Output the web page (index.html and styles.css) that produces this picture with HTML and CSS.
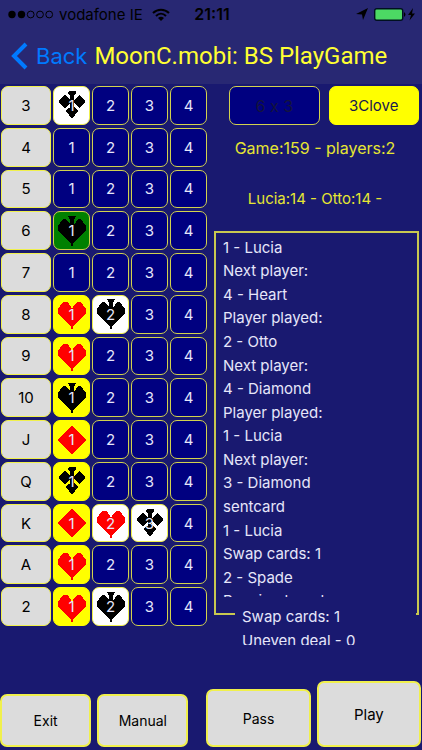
FILE: index.html
```html
<!DOCTYPE html>
<html lang="en">
<head>
<meta charset="utf-8">
<meta name="viewport" content="width=device-width, initial-scale=1">
<title>MoonC.mobi: BS PlayGame</title>
<link rel="stylesheet" href="styles.css">
</head>
<body>
<svg class="defs" aria-hidden="true">
  <symbol id="heart" viewBox="0 0 28 30"><path d="M5 3h4l2 2l2 3l1 2l1-2l2-3l2-2h4l5 7v4l-5 6l-5 4l-3 4v2h-2v-2l-3-4l-5-4l-5-6v-4z"/></symbol>
  <symbol id="spade" viewBox="0 0 28 30"><path d="M10 0h8l-2 4v4l2-2l2-3h3l5 7v4l-5 6l-5 4l-3 4v2h-2v-2l-3-4l-5-4l-5-6v-4l5-7h3l2 3l2 2v-4z"/></symbol>
  <symbol id="diamond" viewBox="0 0 28 30"><path d="M14 0l14 15l-14 15l-14-15z"/></symbol>
  <symbol id="club" viewBox="0 0 28 30"><path d="M11 1h7v2l-2 3v4l5-5h1l5 6v1l-5 6h-1l-5-5v4l1 1h1l2 3l-3 4l-2 3h-2l-2-3l-3-4l2-3h1l1-1v-4l-5 5h-1l-5-6v-1l5-6h1l5 5v-4l-2-3z"/></symbol>
</svg>
<div class="app">
  <header class="top">
    <div class="status">
      <div class="carrier">
        <svg width="46" height="9" viewBox="0 0 46 9" aria-hidden="true"><circle cx="4" cy="4.5" r="3.7"/><circle cx="13.5" cy="4.5" r="3.7"/><g fill="none" stroke="#000"><circle cx="22.700" cy="4.5" r="3.400"/><circle cx="32" cy="4.5" r="3.400"/><circle cx="41.200" cy="4.500" r="3.400"/></g></svg>
        <span>vodafone IE</span>
        <svg width="18" height="13" viewBox="0 0 18 13" aria-hidden="true"><g fill="none" stroke="#000" stroke-width="2"><path d="M1 5c4.500-4.500 11.500-4.500 16 0"/><path d="M4 8c3-3 7-3 10 0"/></g><path d="M6 10q3-2.500 6 0l-3 3z"/></svg>
      </div>
      <time class="clock">21:11</time>
      <div class="power">
        <svg width="12" height="12" viewBox="0 0 12 12" aria-hidden="true"><path d="M12 0L7 12L6 6.500L0 6z"/></svg>
        <svg width="42" height="13" viewBox="0 0 42 13" aria-hidden="true"><rect x=".7" y=".7" width="28" height="11.600" rx="2" fill="#4cd964" stroke="#001020" stroke-width="1.400"/><path d="M30 4q3 2.500 0 5zM39 0l-5 7h3l-1.500 5.500L41 5.500h-3z"/></svg>
      </div>
    </div>
    <nav class="nav">
      <a class="back" href="#"><svg width="17" height="28" viewBox="0 0 17 28" aria-hidden="true"><path d="M15 2L3 14L15 26" fill="none" stroke="#007aff" stroke-width="4"/></svg>Back</a>
      <h1>MoonC.mobi: BS PlayGame</h1>
    </nav>
  </header>

  <main class="play">
    <section class="board" aria-label="Cards">
      <button class="rank">3</button><button class="held"><svg><use href="#club"/></svg><span>1</span></button><button>2</button><button>3</button><button>4</button>
      <button class="rank">4</button><button>1</button><button>2</button><button>3</button><button>4</button>
      <button class="rank">5</button><button>1</button><button>2</button><button>3</button><button>4</button>
      <button class="rank">6</button><button class="table"><svg><use href="#spade"/></svg><span>1</span></button><button>2</button><button>3</button><button>4</button>
      <button class="rank">7</button><button>1</button><button>2</button><button>3</button><button>4</button>
      <button class="rank">8</button><button class="pick red"><svg><use href="#heart"/></svg><span>1</span></button><button class="held"><svg><use href="#spade"/></svg><span>2</span></button><button>3</button><button>4</button>
      <button class="rank">9</button><button class="pick red"><svg><use href="#heart"/></svg><span>1</span></button><button>2</button><button>3</button><button>4</button>
      <button class="rank">10</button><button class="pick"><svg><use href="#spade"/></svg><span>1</span></button><button>2</button><button>3</button><button>4</button>
      <button class="rank">J</button><button class="pick red"><svg><use href="#diamond"/></svg><span>1</span></button><button>2</button><button>3</button><button>4</button>
      <button class="rank">Q</button><button class="pick"><svg><use href="#club"/></svg><span>1</span></button><button>2</button><button>3</button><button>4</button>
      <button class="rank">K</button><button class="pick red"><svg><use href="#diamond"/></svg><span>1</span></button><button class="held red"><svg><use href="#heart"/></svg><span>2</span></button><button class="held"><svg><use href="#club"/></svg><span>3</span></button><button>4</button>
      <button class="rank">A</button><button class="pick red"><svg><use href="#heart"/></svg><span>1</span></button><button>2</button><button>3</button><button>4</button>
      <button class="rank">2</button><button class="pick red"><svg><use href="#heart"/></svg><span>1</span></button><button class="held"><svg><use href="#spade"/></svg><span>2</span></button><button>3</button><button>4</button>
    </section>

    <section class="side">
      <div class="calls">
        <button class="last">6 x 3</button>
        <button class="next">3Clove</button>
      </div>
      <p class="game">Game:159 - players:2</p>
      <p class="counts">Lucia:14 - Otto:14 -</p>
      <div class="log">
        <div class="view">
          <ul>
            <li>1 - Lucia</li>
            <li>Next player:</li>
            <li>4 - Heart</li>
            <li>Player played:</li>
            <li>2 - Otto</li>
            <li>Next player:</li>
            <li>4 - Diamond</li>
            <li>Player played:</li>
            <li>1 - Lucia</li>
            <li>Next player:</li>
            <li>3 - Diamond</li>
            <li>sentcard</li>
            <li>1 - Lucia</li>
            <li>Swap cards: 1</li>
            <li>2 - Spade</li>
            <li>Received card</li>
          </ul>
        </div>
        <div class="notice">Swap cards: 1<br>Uneven deal - 0</div>
      </div>
    </section>
  </main>

  <footer class="actions">
    <button>Exit</button>
    <button>Manual</button>
    <button class="pass">Pass</button>
    <button class="go">Play</button>
  </footer>
</div>
</body>
</html>
```
FILE: styles.css
```css
* { box-sizing: border-box; }

body {
  margin: 0;
  background: #191970;
  color: #e6e6fa;
  font-family: Inter, "Liberation Sans", sans-serif;
  font-size: 15px;
}

h1, p, ul { margin: 0; padding: 0; font-weight: 400; }

.defs { position: absolute; width: 0; height: 0; }

.app {
  display: flex;
  flex-direction: column;
  min-height: 100vh;
}

.top { background: #282873; color: #000; height: 84px; }

.status {
  display: grid;
  grid-template-columns: 1fr auto 1fr;
  align-items: center;
  height: 28px;
  padding: 0 6px 0 8px;
  font-size: 15px;
}
.carrier, .power { display: flex; align-items: center; gap: 5px; }
.carrier svg:last-child { margin-left: 4px; }
.power { justify-content: flex-end; gap: 6px; }
.clock { font-weight: 600; font-size: 16px; }

.nav { display: flex; align-items: center; height: 56px; padding-left: 11px; gap: 7px; }
.back {
  display: flex;
  align-items: center;
  gap: 8px;
  color: #007aff;
  font-size: 22px;
  text-decoration: none;
}
h1 { color: #ff3; font-family: Roboto, "Liberation Sans", sans-serif; font-size: 24px; white-space: nowrap; }

.play { flex: 1; display: flex; padding: 2px 3px 0 1px; }

button {
  display: grid;
  place-items: center;
  min-width: 0;
  margin: 0;
  padding: 0;
  border: 1px solid #d2d24e;
  border-radius: 7px;
  background: #000080;
  color: #e6e6fa;
  font: inherit;
}

.board {
  flex: 206;
  display: grid;
  grid-template-columns: 50fr 37fr 37fr 37fr 37fr;
  grid-auto-rows: 1fr;
  gap: 3px 2px;
}
.board svg, .board span { grid-area: 1 / 1; }
.board svg { width: 28px; height: 30px; fill: #000; shape-rendering: crispEdges; }
.board .red svg { fill: #f00; }
.board .rank { background: #dcdcdc; color: #000; border-color: #f0f04c; }
.board .held { background: #fff; border-color: #f0f04c; }
.board .pick { background: #ff0; border-color: #ff0; }
.board .table { background: #008000; border-color: #d2d24e; }

.side {
  flex: 205;
  display: flex;
  flex-direction: column;
  margin-left: 7px;
  text-align: center;
}
.calls { display: grid; grid-template-columns: 1fr 1fr; gap: 9px; height: 39px; margin-left: 15px; }
.calls .last { color: #14143c; font-size: 16px; font-variant-ligatures: none; }
.calls .next { background: #ff0; border-color: #ff0; color: #191950; }

.game, .counts { padding-right: 3px; color: #e6e632; line-height: 20px; }
.game { margin-top: 13px; font-size: 16px; }
.counts { margin-top: 31px; }

.log {
  position: relative;
  flex: 1;
  display: flex;
  margin: 22px 0 11px;
  padding: 3px 8px 16px 7px;
  border: 2px solid #c8c850;
  text-align: left;
}
.view { flex: 1; display: flex; overflow: hidden; }
.view ul {
  flex: 1;
  display: grid;
  grid-auto-rows: 1fr;
  align-items: center;
  margin-bottom: -16px;
  list-style: none;
  line-height: 20px;
}
.notice {
  position: absolute;
  left: 19px;
  right: 1px;
  bottom: -32px;
  height: 40px;
  padding-left: 7px;
  overflow: hidden;
  background: #191970;
  line-height: 24px;
}

.actions {
  display: grid;
  grid-template-columns: 7fr 7fr 6px 8fr 8fr;
  align-items: end;
  gap: 6px;
  padding: 55px 1px 3px 0;
}
.actions button {
  height: 53px;
  background: #dcdcdc;
  border: 2px solid #f0f04c;
  color: #000;
  font-size: 14px;
}
.actions .pass { grid-column: 4; height: 58px; }
.actions .go { height: 66px; font-size: 15px; }
```
